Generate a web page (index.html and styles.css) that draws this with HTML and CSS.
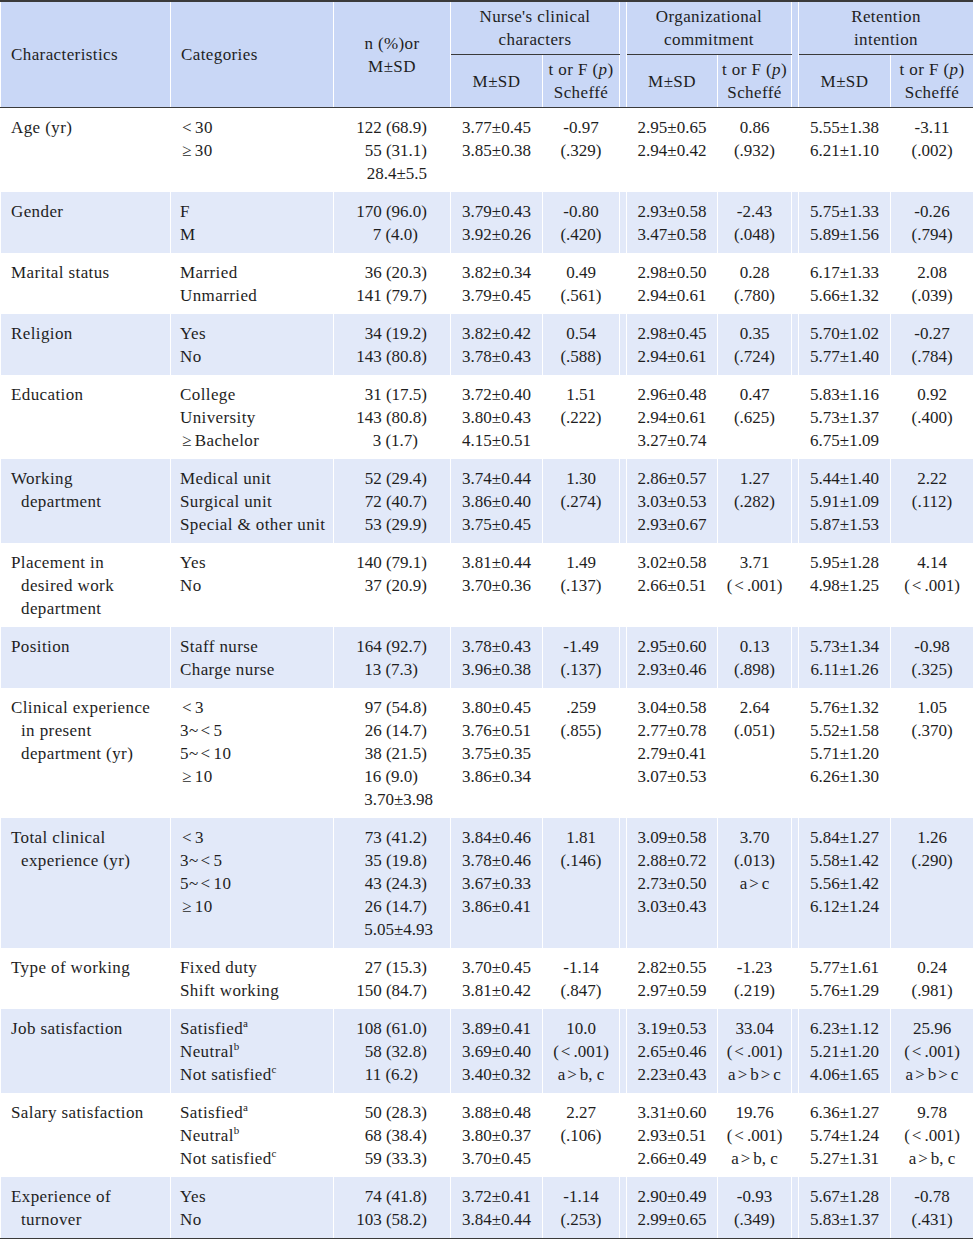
FILE: index.html
```html
<!DOCTYPE html>
<html lang="en">
<head>
<meta charset="utf-8">
<title>Table</title>
<link rel="stylesheet" href="styles.css">
</head>
<body>
<table class="tbl">
  <colgroup>
    <col class="w1"><col class="w2"><col class="w3">
    <col class="w4"><col class="w5"><col class="wg">
    <col class="w6"><col class="w7"><col class="wg">
    <col class="w8"><col class="w9">
  </colgroup>
  <thead>
    <tr class="h1">
      <th rowspan="2" class="l">Characteristics</th>
      <th rowspan="2" class="l">Categories</th>
      <th rowspan="2">n (%)or<br>M±SD</th>
      <th colspan="2" class="grp">Nurse's clinical<br>characters</th>
      <th rowspan="2" class="gap"></th>
      <th colspan="2" class="grp">Organizational<br>commitment</th>
      <th rowspan="2" class="gap"></th>
      <th colspan="2" class="grp">Retention<br>intention</th>
    </tr>
    <tr class="h2">
      <th>M±SD</th><th>t or F (<i>p</i>)<br>Scheffé</th>
      <th>M±SD</th><th>t or F (<i>p</i>)<br>Scheffé</th>
      <th>M±SD</th><th>t or F (<i>p</i>)<br>Scheffé</th>
    </tr>
  </thead>
  <tbody>
    <tr>
      <td class="ch">Age (yr)</td>
      <td class="cat"><span class="op">&lt;</span>30<br><span class="op">≥</span>30</td>
      <td class="n"><span>122 (68.9)</span><span>55 (31.1)</span><span>28.4±5.5</span></td>
      <td class="c">3.77±0.45<br>3.85±0.38</td><td class="c">-0.97<br>(.329)</td><td class="gap"></td>
      <td class="c">2.95±0.65<br>2.94±0.42</td><td class="c">0.86<br>(.932)</td><td class="gap"></td>
      <td class="c">5.55±1.38<br>6.21±1.10</td><td class="c">-3.11<br>(.002)</td>
    </tr>
    <tr class="alt">
      <td class="ch">Gender</td>
      <td class="cat">F<br>M</td>
      <td class="n"><span>170 (96.0)</span><span class="f">7 (4.0)</span></td>
      <td class="c">3.79±0.43<br>3.92±0.26</td><td class="c">-0.80<br>(.420)</td><td class="gap"></td>
      <td class="c">2.93±0.58<br>3.47±0.58</td><td class="c">-2.43<br>(.048)</td><td class="gap"></td>
      <td class="c">5.75±1.33<br>5.89±1.56</td><td class="c">-0.26<br>(.794)</td>
    </tr>
    <tr>
      <td class="ch">Marital status</td>
      <td class="cat">Married<br>Unmarried</td>
      <td class="n"><span>36 (20.3)</span><span>141 (79.7)</span></td>
      <td class="c">3.82±0.34<br>3.79±0.45</td><td class="c">0.49<br>(.561)</td><td class="gap"></td>
      <td class="c">2.98±0.50<br>2.94±0.61</td><td class="c">0.28<br>(.780)</td><td class="gap"></td>
      <td class="c">6.17±1.33<br>5.66±1.32</td><td class="c">2.08<br>(.039)</td>
    </tr>
    <tr class="alt">
      <td class="ch">Religion</td>
      <td class="cat">Yes<br>No</td>
      <td class="n"><span>34 (19.2)</span><span>143 (80.8)</span></td>
      <td class="c">3.82±0.42<br>3.78±0.43</td><td class="c">0.54<br>(.588)</td><td class="gap"></td>
      <td class="c">2.98±0.45<br>2.94±0.61</td><td class="c">0.35<br>(.724)</td><td class="gap"></td>
      <td class="c">5.70±1.02<br>5.77±1.40</td><td class="c">-0.27<br>(.784)</td>
    </tr>
    <tr>
      <td class="ch">Education</td>
      <td class="cat">College<br>University<br><span class="op">≥</span>Bachelor</td>
      <td class="n"><span>31 (17.5)</span><span>143 (80.8)</span><span class="f">3 (1.7)</span></td>
      <td class="c">3.72±0.40<br>3.80±0.43<br>4.15±0.51</td><td class="c">1.51<br>(.222)</td><td class="gap"></td>
      <td class="c">2.96±0.48<br>2.94±0.61<br>3.27±0.74</td><td class="c">0.47<br>(.625)</td><td class="gap"></td>
      <td class="c">5.83±1.16<br>5.73±1.37<br>6.75±1.09</td><td class="c">0.92<br>(.400)</td>
    </tr>
    <tr class="alt">
      <td class="ch">Working<br>department</td>
      <td class="cat">Medical unit<br>Surgical unit<br>Special &amp; other unit</td>
      <td class="n"><span>52 (29.4)</span><span>72 (40.7)</span><span>53 (29.9)</span></td>
      <td class="c">3.74±0.44<br>3.86±0.40<br>3.75±0.45</td><td class="c">1.30<br>(.274)</td><td class="gap"></td>
      <td class="c">2.86±0.57<br>3.03±0.53<br>2.93±0.67</td><td class="c">1.27<br>(.282)</td><td class="gap"></td>
      <td class="c">5.44±1.40<br>5.91±1.09<br>5.87±1.53</td><td class="c">2.22<br>(.112)</td>
    </tr>
    <tr>
      <td class="ch">Placement in<br>desired work<br>department</td>
      <td class="cat">Yes<br>No</td>
      <td class="n"><span>140 (79.1)</span><span>37 (20.9)</span></td>
      <td class="c">3.81±0.44<br>3.70±0.36</td><td class="c">1.49<br>(.137)</td><td class="gap"></td>
      <td class="c">3.02±0.58<br>2.66±0.51</td><td class="c">3.71<br>(<span class="op">&lt;</span>.001)</td><td class="gap"></td>
      <td class="c">5.95±1.28<br>4.98±1.25</td><td class="c">4.14<br>(<span class="op">&lt;</span>.001)</td>
    </tr>
    <tr class="alt">
      <td class="ch">Position</td>
      <td class="cat">Staff nurse<br>Charge nurse</td>
      <td class="n"><span>164 (92.7)</span><span class="f">13 (7.3)</span></td>
      <td class="c">3.78±0.43<br>3.96±0.38</td><td class="c">-1.49<br>(.137)</td><td class="gap"></td>
      <td class="c">2.95±0.60<br>2.93±0.46</td><td class="c">0.13<br>(.898)</td><td class="gap"></td>
      <td class="c">5.73±1.34<br>6.11±1.26</td><td class="c">-0.98<br>(.325)</td>
    </tr>
    <tr>
      <td class="ch">Clinical experience<br>in present<br>department (yr)</td>
      <td class="cat"><span class="op">&lt;</span>3<br>3~<span class="op">&lt;</span>5<br>5~<span class="op">&lt;</span>10<br><span class="op">≥</span>10</td>
      <td class="n"><span>97 (54.8)</span><span>26 (14.7)</span><span>38 (21.5)</span><span class="f">16 (9.0)</span><span class="m">3.70±3.98</span></td>
      <td class="c">3.80±0.45<br>3.76±0.51<br>3.75±0.35<br>3.86±0.34</td><td class="c">.259<br>(.855)</td><td class="gap"></td>
      <td class="c">3.04±0.58<br>2.77±0.78<br>2.79±0.41<br>3.07±0.53</td><td class="c">2.64<br>(.051)</td><td class="gap"></td>
      <td class="c">5.76±1.32<br>5.52±1.58<br>5.71±1.20<br>6.26±1.30</td><td class="c">1.05<br>(.370)</td>
    </tr>
    <tr class="alt">
      <td class="ch">Total clinical<br>experience (yr)</td>
      <td class="cat"><span class="op">&lt;</span>3<br>3~<span class="op">&lt;</span>5<br>5~<span class="op">&lt;</span>10<br><span class="op">≥</span>10</td>
      <td class="n"><span>73 (41.2)</span><span>35 (19.8)</span><span>43 (24.3)</span><span>26 (14.7)</span><span class="m">5.05±4.93</span></td>
      <td class="c">3.84±0.46<br>3.78±0.46<br>3.67±0.33<br>3.86±0.41</td><td class="c">1.81<br>(.146)</td><td class="gap"></td>
      <td class="c">3.09±0.58<br>2.88±0.72<br>2.73±0.50<br>3.03±0.43</td><td class="c">3.70<br>(.013)<br>a<span class="op">&gt;</span>c</td><td class="gap"></td>
      <td class="c">5.84±1.27<br>5.58±1.42<br>5.56±1.42<br>6.12±1.24</td><td class="c">1.26<br>(.290)</td>
    </tr>
    <tr>
      <td class="ch">Type of working</td>
      <td class="cat">Fixed duty<br>Shift working</td>
      <td class="n"><span>27 (15.3)</span><span>150 (84.7)</span></td>
      <td class="c">3.70±0.45<br>3.81±0.42</td><td class="c">-1.14<br>(.847)</td><td class="gap"></td>
      <td class="c">2.82±0.55<br>2.97±0.59</td><td class="c">-1.23<br>(.219)</td><td class="gap"></td>
      <td class="c">5.77±1.61<br>5.76±1.29</td><td class="c">0.24<br>(.981)</td>
    </tr>
    <tr class="alt">
      <td class="ch">Job satisfaction</td>
      <td class="cat">Satisfied<sup>a</sup><br>Neutral<sup>b</sup><br>Not satisfied<sup>c</sup></td>
      <td class="n"><span>108 (61.0)</span><span>58 (32.8)</span><span class="f">11 (6.2)</span></td>
      <td class="c">3.89±0.41<br>3.69±0.40<br>3.40±0.32</td><td class="c">10.0<br>(<span class="op">&lt;</span>.001)<br>a<span class="op">&gt;</span>b, c</td><td class="gap"></td>
      <td class="c">3.19±0.53<br>2.65±0.46<br>2.23±0.43</td><td class="c">33.04<br>(<span class="op">&lt;</span>.001)<br>a<span class="op">&gt;</span>b<span class="op">&gt;</span>c</td><td class="gap"></td>
      <td class="c">6.23±1.12<br>5.21±1.20<br>4.06±1.65</td><td class="c">25.96<br>(<span class="op">&lt;</span>.001)<br>a<span class="op">&gt;</span>b<span class="op">&gt;</span>c</td>
    </tr>
    <tr>
      <td class="ch">Salary satisfaction</td>
      <td class="cat">Satisfied<sup>a</sup><br>Neutral<sup>b</sup><br>Not satisfied<sup>c</sup></td>
      <td class="n"><span>50 (28.3)</span><span>68 (38.4)</span><span>59 (33.3)</span></td>
      <td class="c">3.88±0.48<br>3.80±0.37<br>3.70±0.45</td><td class="c">2.27<br>(.106)</td><td class="gap"></td>
      <td class="c">3.31±0.60<br>2.93±0.51<br>2.66±0.49</td><td class="c">19.76<br>(<span class="op">&lt;</span>.001)<br>a<span class="op">&gt;</span>b, c</td><td class="gap"></td>
      <td class="c">6.36±1.27<br>5.74±1.24<br>5.27±1.31</td><td class="c">9.78<br>(<span class="op">&lt;</span>.001)<br>a<span class="op">&gt;</span>b, c</td>
    </tr>
    <tr class="alt">
      <td class="ch">Experience of<br>turnover</td>
      <td class="cat">Yes<br>No</td>
      <td class="n"><span>74 (41.8)</span><span>103 (58.2)</span></td>
      <td class="c">3.72±0.41<br>3.84±0.44</td><td class="c">-1.14<br>(.253)</td><td class="gap"></td>
      <td class="c">2.90±0.49<br>2.99±0.65</td><td class="c">-0.93<br>(.349)</td><td class="gap"></td>
      <td class="c">5.67±1.28<br>5.83±1.37</td><td class="c">-0.78<br>(.431)</td>
    </tr>
  </tbody>
</table>
</body>
</html>
```

FILE: styles.css
```css
html, body {
  margin: 0;
  padding: 0;
  background: #ffffff;
}

.tbl {
  width: 973px;
  table-layout: fixed;
  border-collapse: collapse;
  font-family: "Liberation Serif", "Times New Roman", serif;
  font-size: 17px;
  line-height: 23px;
  color: #1e1e1e;
  border-top: 2px solid #3a3a3a;
  border-bottom: 2px solid #3a3a3a;
}

.w1 { width: 170px; }
.w2 { width: 163px; }
.w3 { width: 117px; }
.w4 { width: 92px; }
.w5 { width: 77px; }
.wg { width: 7px; }
.w6 { width: 91px; }
.w7 { width: 74px; }
.w8 { width: 92px; }
.w9 { width: 83px; }

th, td {
  border-left: 1px solid #ffffff;
  border-right: 1px solid #ffffff;
  vertical-align: top;
  padding: 8px 2px 7px;
}

thead th {
  background: #c9d7f6;
  font-weight: normal;
  text-align: center;
  vertical-align: middle;
  padding: 3px 2px;
  letter-spacing: 0.4px;
  white-space: nowrap;
}

thead th.l {
  text-align: left;
  padding-left: 10px;
}

thead tr.h2 th {
  border-bottom: 1px solid #3a3a3a;
  height: 46px;
}

thead tr.h1 th[rowspan] {
  border-bottom: 1px solid #3a3a3a;
}

thead th.grp {
  border-bottom: 1px solid #3a3a3a;
  height: 46px;
}

tbody tr.alt td {
  background: #e2e9f9;
}

td.ch {
  padding-left: 20px;
  text-indent: -10px;
  padding-right: 2px;
  letter-spacing: 0.4px;
  white-space: nowrap;
}

td.cat {
  padding-left: 9px;
  white-space: nowrap;
  letter-spacing: 0.4px;
}

td.n {
  text-align: right;
  padding-right: 23px;
}

td.n span {
  display: block;
  white-space: nowrap;
}

td.n span.f {
  padding-right: 9px;
}

td.n span.m {
  margin-right: -6px;
}

td.c {
  text-align: center;
  white-space: nowrap;
}

.op {
  display: inline-block;
  margin: 0 3px 0 2px;
}

sup {
  font-size: 11px;
  line-height: 0;
  vertical-align: 7px;
}

i {
  font-style: italic;
}
```
